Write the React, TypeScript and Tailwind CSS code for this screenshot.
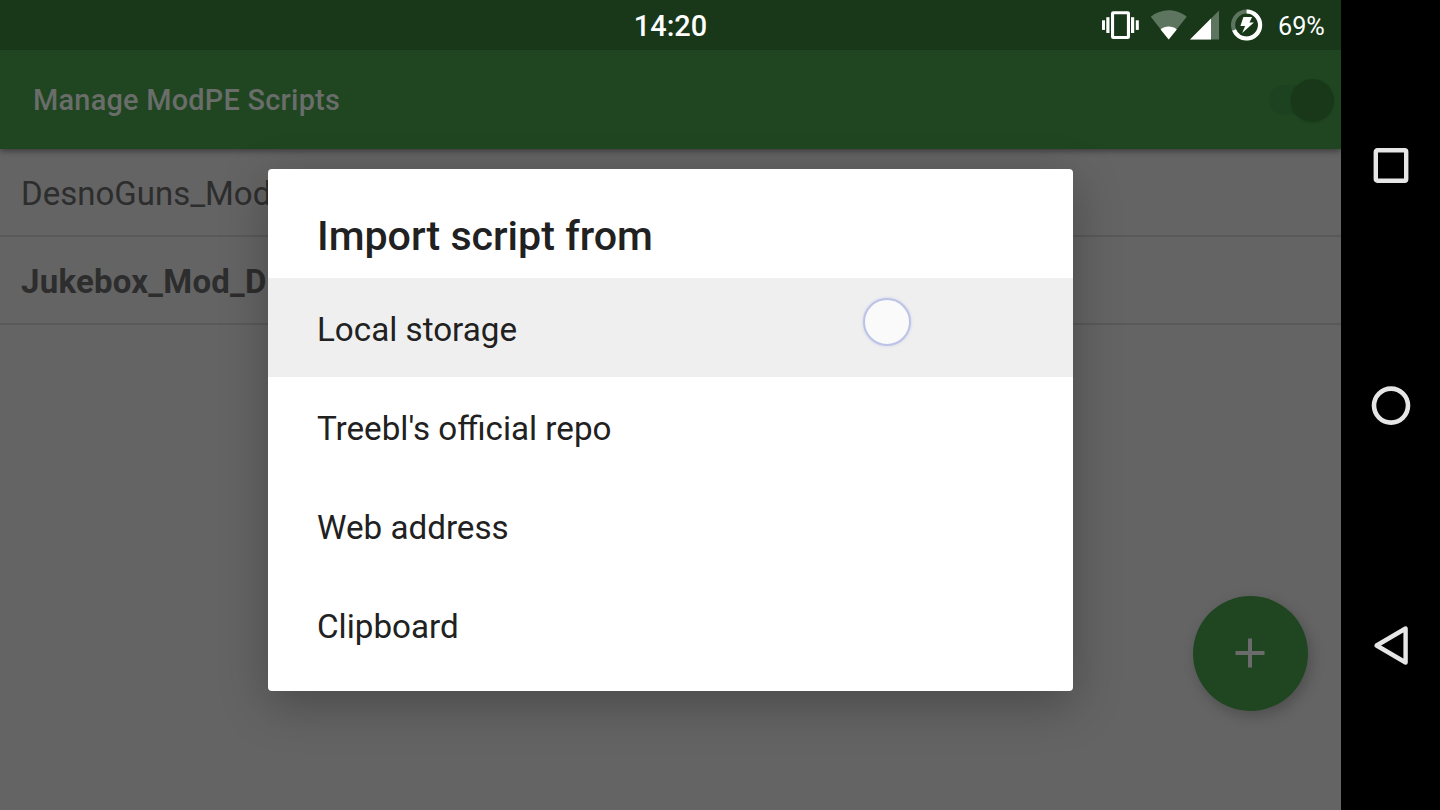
const scripts = [
  { name: "DesnoGuns_Mod", active: false },
  { name: "Jukebox_Mod_D", active: true },
];

const sources = ["Local storage", "Treebl's official repo", "Web address", "Clipboard"];

function VibrateIcon() {
  return (
    <svg className="h-[28px] w-[38px] shrink-0" viewBox="0 0 38 28" fill="white">
      <rect x="0" y="9.3" width="3" height="9.6" />
      <rect x="4.3" y="6.2" width="3.2" height="15.8" />
      <rect x="29" y="6.2" width="3.2" height="15.8" />
      <rect x="33.8" y="9.3" width="3" height="9.6" />
      <path
        fillRule="evenodd"
        d="M11.2 0.2h14.6a2.2 2.2 0 0 1 2.2 2.2v23.4a2.2 2.2 0 0 1-2.2 2.2H11.2a2.2 2.2 0 0 1-2.2-2.2V2.4a2.2 2.2 0 0 1 2.2-2.2zM12.1 3.2v21.8h12.8V3.2z"
      />
    </svg>
  );
}

function WifiIcon() {
  return (
    <svg className="h-[30px] w-[37px] shrink-0" viewBox="0.9 0 37 30" fill="white">
      <path fillOpacity="0.3" d="M0.6 6.7C5.6 2.6 11.8 0.2 18.6 0.2S31.6 2.6 36.6 6.7L18.6 29.4z" />
      <path d="M10.5 19.4C12.8 17.6 15.6 16.6 18.6 16.6s5.8 1 8.1 2.8L18.6 29.4z" />
    </svg>
  );
}

function SignalIcon() {
  return (
    <svg className="h-[30px] w-[30px] shrink-0" viewBox="0 0 30 30" fill="white">
      <path fillOpacity="0.3" d="M0 29.5L29 0.5v29z" />
      <path d="M0 29.5L21 8.5v21z" />
    </svg>
  );
}

function BatteryIcon() {
  return (
    <svg className="h-[32px] w-[32px] shrink-0" viewBox="0.4 0 32 32" fill="none">
      <circle cx="16" cy="16" r="13.5" stroke="white" strokeOpacity="0.3" strokeWidth="4.2" />
      <circle
        cx="16"
        cy="16"
        r="13.5"
        stroke="white"
        strokeWidth="4.2"
        pathLength="100"
        strokeDasharray="69 31"
        transform="rotate(-90 16 16)"
      />
      <path fill="white" d="M12.8 8.1h8.7l-2.6 5.4h4.4L11.6 24l2.9-7.1H9.8z" />
    </svg>
  );
}

export default function App() {
  return (
    <div
      className="relative flex h-[810px] w-[1440px] overflow-hidden bg-black text-[#212121]"
      style={{ fontFamily: 'Roboto, "Liberation Sans", sans-serif' }}
    >
      <div className="relative flex w-[1341px] shrink-0 flex-col overflow-hidden bg-[#646464]">
        <header className="z-10 shrink-0 bg-[#1f4621] shadow-[0_2px_6px_rgba(0,0,0,0.42)]">
          <div className="grid h-[50px] grid-cols-[1fr_auto_1fr] items-center bg-[#183819] text-white">
            <span />
            <span className="pt-[3px] text-[28.9px] leading-none font-medium">14:20</span>
            <div className="flex items-center justify-end pr-[16px]">
              <VibrateIcon />
              <span className="w-[11px]" />
              <WifiIcon />
              <span className="w-[2px]" />
              <SignalIcon />
              <span className="w-[11px]" />
              <BatteryIcon />
              <span className="ml-[15px] w-[47px] pt-[3px] text-[25.2px] leading-none">69%</span>
            </div>
          </div>
          <div className="flex h-[99px] items-center justify-between pr-[7px] pl-[33px]">
            <h1 className="pt-[2px] text-[28.9px] leading-none font-medium tracking-[0.24px] text-[#6a6d6a]">
              Manage ModPE Scripts
            </h1>
            <div className="flex h-[45px] w-[66px] items-end justify-end">
              <div className="-mr-[30px] mb-[7px] h-[30px] w-[52px] rounded-full bg-[#1d421f]" />
              <div className="relative h-[43px] w-[43px] shrink-0 rounded-full bg-[#183819] shadow-[0_1px_3px_rgba(0,0,0,0.12)]" />
            </div>
          </div>
        </header>
        <main>
          {scripts.map((script) => (
            <div
              key={script.name}
              className="flex h-[88px] items-center border-b-2 border-[#595959] pt-[2px] pl-[21px]"
            >
              <span
                className={
                  script.active
                    ? "text-[33px] leading-none font-bold tracking-[0.24px] text-[#2d2d2d]"
                    : "text-[33px] leading-none text-[#2d2d2d]"
                }
              >
                {script.name}
              </span>
            </div>
          ))}
        </main>
        <button
          aria-label="Add script"
          className="absolute top-[595.5px] left-[1192.5px] flex h-[115.5px] w-[115.5px] items-center justify-center rounded-full bg-[#1f4621] shadow-[3px_5px_14px_rgba(0,0,0,0.22)]"
        >
          <svg className="h-[30px] w-[30px]" viewBox="0 0 30 30" fill="#6b6b6b">
            <path d="M13 0.5h4V13h12.5v4H17v12.5h-4V17H0.5v-4H13z" />
          </svg>
        </button>
      </div>

      <nav className="flex flex-1 flex-col items-center justify-center gap-[200px] pb-px">
        <svg className="h-[40px] w-[40px]" viewBox="0 0 40 40" fill="none" stroke="#e6e6e6" strokeWidth="4.4">
          <rect x="4.8" y="5.3" width="30.4" height="30.4" rx="1.5" />
        </svg>
        <svg className="h-[40px] w-[40px]" viewBox="0 0 40 40" fill="none" stroke="#e6e6e6" strokeWidth="4.6">
          <circle cx="20" cy="20.6" r="17" />
        </svg>
        <svg
          className="h-[40px] w-[40px]"
          viewBox="0 0 40 40"
          fill="none"
          stroke="#e6e6e6"
          strokeWidth="4.4"
          strokeLinejoin="round"
        >
          <path d="M34.6 3.5v34L5.6 20.5z" />
        </svg>
      </nav>

      <section
        role="dialog"
        className="absolute top-[169px] left-[268px] z-20 flex h-[522px] w-[805px] flex-col overflow-hidden rounded-[4px] bg-white shadow-[0_13px_48px_rgba(0,0,0,0.27)]"
      >
        <h2 className="flex h-[109px] shrink-0 items-end pb-[20px] pl-[49px] text-[41.15px] leading-[44px] font-medium">
          Import script from
        </h2>
        {sources.map((source, index) => (
          <div
            key={source}
            className={
              index === 0
                ? "relative flex h-[99px] items-center bg-[#efefef] pt-[5px] pl-[49px] text-[33.2px] leading-none"
                : "flex h-[99px] items-center pt-[5px] pl-[49px] text-[33.2px] leading-none"
            }
          >
            {source}
            {index === 0 && (
              <span className="absolute top-[20px] left-[595px] h-[48px] w-[48px] rounded-full border-[2px] border-[#bdc3e6] bg-[#fafafa] shadow-[0_0_3px_rgba(180,188,230,0.6)]" />
            )}
          </div>
        ))}
      </section>
    </div>
  );
}
